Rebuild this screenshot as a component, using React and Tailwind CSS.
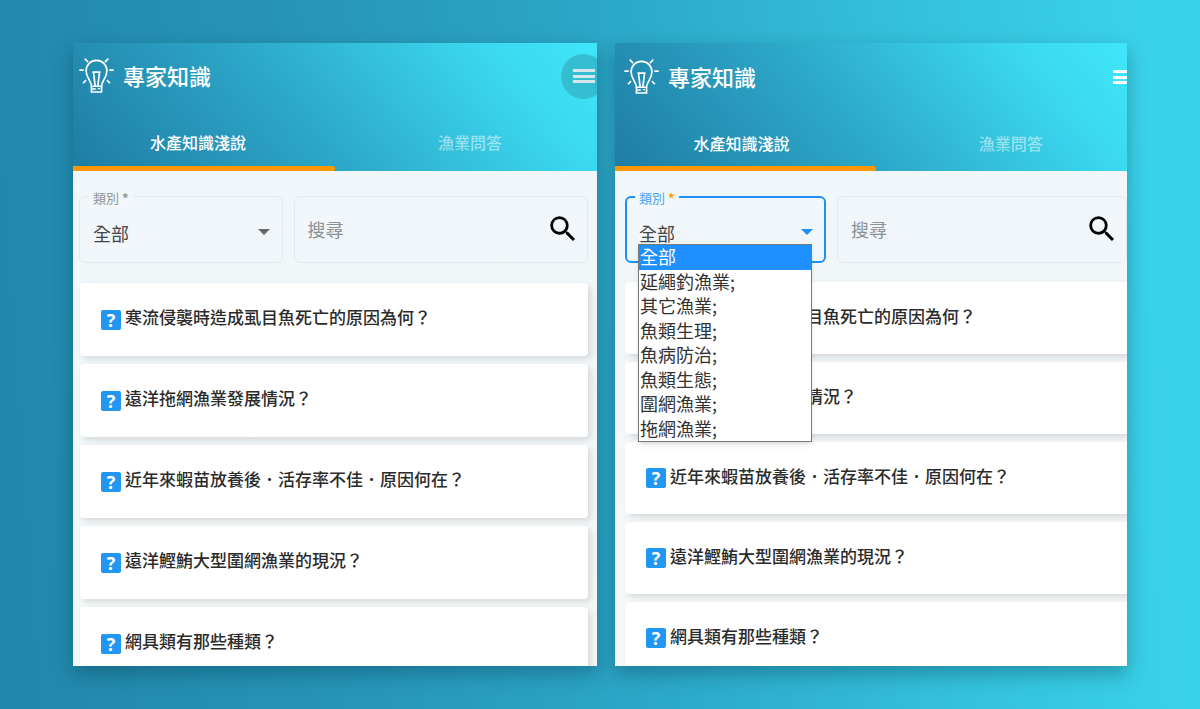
import React from 'react';
import clsx from 'clsx';
import { MdSearch } from 'react-icons/md';

const questions = [
  '寒流侵襲時造成虱目魚死亡的原因為何？',
  '遠洋拖網漁業發展情況？',
  '近年來蝦苗放養後．活存率不佳．原因何在？',
  '遠洋鰹鮪大型圍網漁業的現況？',
  '網具類有那些種類？',
];

const categories = ['全部', '延繩釣漁業;', '其它漁業;', '魚類生理;', '魚病防治;', '魚類生態;', '圍網漁業;', '拖網漁業;'];

const BulbIcon = () => (
  <svg viewBox="56 84 104 104" className="w-[35px] h-[35px] shrink-0" fill="none" stroke="currentColor" strokeWidth="5" aria-hidden="true">
    <path d="M73 86l10 10M143 86l-10 10M57 120h13M146 120h13M68 159l9-9M148 159l-9-9" />
    <path d="M93 168c0-16-16-25-16-46a31 31 0 0 1 62 0c0 21-16 30-16 46z" />
    <path d="M93 168v17h30v-17" />
    <path d="M96 126h24M99 127l5 40M117 127l-5 40" />
    <path d="M94 176h12M112 175h7" strokeWidth="4" />
  </svg>
);

const MenuButton = ({ pressed }) => (
  <button type="button" aria-label="選單" className={clsx('w-[45px] h-[45px] -mr-[9px] rounded-full shrink-0 flex items-center justify-center', pressed ? 'bg-[#35bed2] text-[#d7e8ea]' : 'text-white')}>
    <svg viewBox="0 0 22 16" className="w-[22px] h-4" fill="currentColor" aria-hidden="true">
      <path d="M0 1h22v3H0zM0 7h22v3H0zM0 12h22v3H0z" />
    </svg>
  </button>
);

const Header = ({ pressed, inset }) => (
  <header className="h-32 text-white">
    <div className={clsx('flex items-center justify-between', inset ? 'h-[68px] pl-[9px]' : 'h-[66px] pl-1.5')}>
      <h1 className="flex items-center gap-[9px] pb-0.5 text-[22px] leading-8 font-medium">
        <BulbIcon />
        專家知識
      </h1>
      <MenuButton pressed={pressed} />
    </div>
    <nav className={clsx('flex text-base font-medium', inset ? 'h-[60px]' : 'h-[62px]')}>
      <a href="#knowledge" className={clsx('relative w-1/2 flex items-center justify-center pt-1', inset ? 'pr-2' : 'pr-3')}>
        水產知識淺說
        <span className="absolute bottom-0 left-0 w-full h-[5px] rounded-r-sm bg-[#ff9800]" />
      </a>
      <a href="#qa" className="w-1/2 flex items-center justify-center pt-1 pl-2 text-white/50">漁業問答</a>
    </nav>
  </header>
);

const CategoryField = ({ id, open }) => (
  <div className="relative basis-[40%] shrink-0">
    <label htmlFor={id} className={clsx('absolute -top-2 left-2.5 px-1 bg-[#f1f7fa] text-[13px] leading-5', open ? 'text-[#4a9ff0]' : 'text-[#8f9496]')}>
      類別 <span className={clsx('font-bold', open && 'text-[#ff9800]')}>*</span>
    </label>
    <select
      id={id}
      defaultValue="全部"
      className={clsx('w-full h-[67px] appearance-none rounded-md pt-1.5 text-lg text-[#444] bg-transparent outline-none', open ? 'border-2 border-[#1e8ff5] px-3' : 'border border-[#e3e9ec] px-[13px]')}
    >
      {categories.map(c => <option key={c}>{c}</option>)}
    </select>
    <svg viewBox="0 0 12 6" className={clsx('absolute top-[33px] right-[13px] w-3 h-1.5 pointer-events-none', open ? 'text-[#1e8ff5]' : 'text-[#666]')} fill="currentColor" aria-hidden="true">
      <path d="M0 0h12L6 6z" />
    </svg>
    {open && (
      <ul role="listbox" aria-label="類別" className="absolute z-10 top-12 left-[13px] w-[174px] h-[198px] grid grid-rows-8 bg-white border border-[#7a7a7a] shadow-md text-[18px] leading-6 text-[#333]">
        {categories.map((c, i) => (
          <li key={c} role="option" aria-selected={i === 0} className={clsx('flex items-center pl-px pb-0.5', i === 0 && 'bg-[#1e90ff] text-white')}>{c}</li>
        ))}
      </ul>
    )}
  </div>
);

const SearchField = ({ id }) => (
  <div className="flex-1 min-w-0 h-[67px] flex items-center rounded-md border border-[#e3e9ec] pl-[13px] pr-[7px] pb-0.5">
    <input id={id} type="text" aria-label="搜尋" placeholder="搜尋" className="flex-1 min-w-0 bg-transparent text-lg outline-none placeholder:text-[#8c9194]" />
    <button type="button" aria-label="開始搜尋" className="shrink-0">
      <MdSearch className="w-[34px] h-[34px] text-black" />
    </button>
  </div>
);

const QuestionCard = ({ text, inset }) => (
  <li className={clsx('shrink-0 flex items-center gap-1 pl-[21px] bg-white rounded-sm shadow-[3px_3px_6px_rgba(0,0,0,0.12)]', inset ? 'h-[72px]' : 'h-[73px]')}>
    <span className="w-5 h-5 shrink-0 rounded-xs bg-[#2196f3] text-white font-bold text-lg leading-5 text-center font-['Open_Sans',sans-serif]">?</span>
    <a href="#question" className={clsx('text-[17px] leading-6 font-medium text-[#2b2b2b] whitespace-nowrap', inset ? 'pb-1' : 'pb-1.5')}>{text}</a>
  </li>
);

const Phone = ({ id, open, pressed, inset }) => (
  <div className={clsx('h-full flex flex-col', inset ? 'w-[102%]' : 'w-full')}>
    <Header pressed={pressed} inset={inset} />
    <main className={clsx('flex-1 min-h-0 pt-[25px] bg-linear-to-b from-[#f0f6fa] to-[#f5f8f8]', inset ? 'px-2.5' : 'pl-1.5 pr-[9px]')}>
      <div className="flex gap-[11px]">
        <CategoryField id={`${id}-category`} open={open} />
        <SearchField id={`${id}-search`} />
      </div>
      <ul className={clsx('flex flex-col gap-2', inset ? 'mt-[19px] -mr-2.5' : 'mt-5 ml-px')}>
        {questions.map(q => <QuestionCard key={q} text={q} inset={inset} />)}
      </ul>
    </main>
  </div>
);

const panel = 'min-w-0 overflow-hidden bg-linear-[50deg,#1f7ca4_0%,#2ca6c7_42%,#3bd9ef_82%,#3fe6f9_100%] bg-[length:100%_128px] bg-no-repeat shadow-[0_8px_18px_rgba(0,50,70,0.35)]';

export default function App() {
  return (
    <div lang="zh-Hant" className="h-screen flex gap-[18px] px-[73px] py-[43px] overflow-hidden font-['Noto_Sans_CJK_TC','Noto_Sans',sans-serif] bg-linear-[86deg,#2187ab_0%,#2693b5_25%,#2ca7c7_52%,#34c2dc_78%,#3ad2e9_95%]">
      <section className={clsx(panel, 'flex-[524]')}>
        <Phone id="list" pressed />
      </section>
      <section className={clsx(panel, 'flex-[512]')}>
        <Phone id="picker" open inset />
      </section>
    </div>
  );
}
